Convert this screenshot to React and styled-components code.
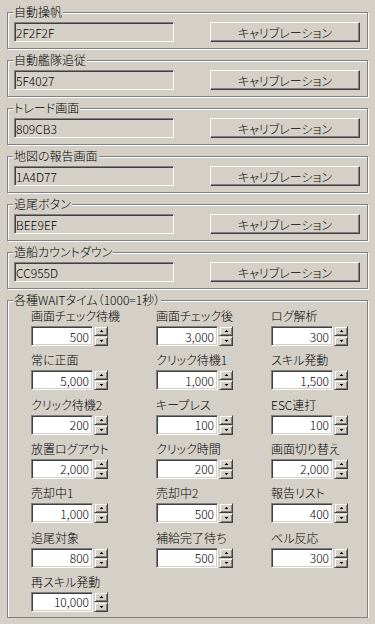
import React from 'react'
import styled, { createGlobalStyle } from 'styled-components'

const GlobalStyle = createGlobalStyle`
  html, body {
    margin: 0;
    padding: 0;
    background: #d4d0c8;
  }
  body {
    font-family: "Noto Sans CJK JP", "Noto Sans", sans-serif;
    font-size: 12px;
    font-weight: 300;
    color: #000;
    font-feature-settings: "palt";
  }
`

const colorGroups = [
  { title: '自動操帆', value: '2F2F2F' },
  { title: '自動艦隊追従', value: '5F4027' },
  { title: 'トレード画面', value: '809CB3' },
  { title: '地図の報告画面', value: '1A4D77' },
  { title: '追尾ボタン', value: 'BEE9EF' },
  { title: '造船カウントダウン', value: 'CC955D' },
]

const waits = [
  ['画面チェック待機', '500'], ['画面チェック後', '3,000'], ['ログ解析', '300'],
  ['常に正面', '5,000'], ['クリック待機1', '1,000'], ['スキル発動', '1,500'],
  ['クリック待機2', '200'], ['キープレス', '100'], ['ESC連打', '100'],
  ['放置ログアウト', '2,000'], ['クリック時間', '200'], ['画面切り替え', '2,000'],
  ['売却中1', '1,000'], ['売却中2', '500'], ['報告リスト', '400'],
  ['追尾対象', '800'], ['補給完了待ち', '500'], ['ベル反応', '300'],
  ['再スキル発動', '10,000'],
]

const Window = styled.div`
  padding-top: 5px;
  display: flex;
  flex-direction: column;
  gap: 4px;
`

const Group = styled.fieldset`
  margin: 0 7px;
  padding: 3px 7px ${p => p.$bottom || 6}px 6px;
  min-width: 0;
  border: 1px solid #808080;
  box-shadow: inset 1px 1px 0 #fff, 1px 1px 0 #fff;
`

const Legend = styled.legend`
  margin-left: -1px;
  padding: 0 1px;
  line-height: 14px;
  font-size: 12px;
  background: #d4d0c8;
`

const Row = styled.div`
  display: flex;
  justify-content: space-between;
  align-items: center;
`

const ReadField = styled.input`
  box-sizing: border-box;
  width: 160px;
  height: 20px;
  margin: 0;
  padding: 0 1px;
  font: inherit;
  font-feature-settings: "palt";
  color: #000;
  background: #d4d0c8;
  border: 1px solid;
  border-color: #808080 #fff #fff #808080;
  box-shadow: inset 1px 1px 0 #404040, inset -1px -1px 0 #d4d0c8;
  outline: none;
`

const Button = styled.button`
  box-sizing: border-box;
  width: 150px;
  height: 20px;
  margin: 0;
  padding: 0;
  font: inherit;
  font-feature-settings: "palt";
  color: #000;
  background: #d4d0c8;
  border: 1px solid;
  border-color: #fff #404040 #404040 #fff;
  box-shadow: inset -1px -1px 0 #808080;
`

const WaitGrid = styled.div`
  margin-top: -1px;
  padding-left: 17px;
  display: grid;
  grid-template-columns: 125px 115px 77px;
  row-gap: 7.33px;
`

const Cell = styled.div`
  display: flex;
  flex-direction: column;
  gap: 3px;
`

const Label = styled.div`
  line-height: 14px;
  white-space: nowrap;
`

const SpinRow = styled.div`
  display: flex;
  gap: 1px;
`

const SpinField = styled.input`
  box-sizing: border-box;
  width: 62px;
  height: 20px;
  margin: 0;
  padding: 0 3px 0 1px;
  text-align: right;
  font: inherit;
  color: #000;
  background: #fff;
  border: 1px solid;
  border-color: #808080 #fff #fff #808080;
  box-shadow: inset 1px 1px 0 #404040, inset -1px -1px 0 #d4d0c8;
  outline: none;
`

const Spinner = styled.div`
  width: 14px;
  height: 20px;
  display: flex;
  flex-direction: column;
`

const SpinButton = styled.div`
  box-sizing: border-box;
  flex: 1;
  display: flex;
  align-items: center;
  justify-content: center;
  background: #d4d0c8;
  border: 1px solid;
  border-color: #d4d0c8 #404040 #404040 #d4d0c8;
  box-shadow: inset 1px 1px 0 #fff, inset -1px -1px 0 #808080;
`

const Arrow = ({ down }) => (
  <svg width="3" height="2" viewBox="0 0 3 2" shapeRendering="crispEdges">
    {down ? (
      <>
        <rect x="0" y="0" width="3" height="1" fill="#000" />
        <rect x="1" y="1" width="1" height="1" fill="#000" />
      </>
    ) : (
      <>
        <rect x="1" y="0" width="1" height="1" fill="#000" />
        <rect x="0" y="1" width="3" height="1" fill="#000" />
      </>
    )}
  </svg>
)

const SpinEdit = ({ value }) => (
  <SpinRow>
    <SpinField value={value} readOnly />
    <Spinner>
      <SpinButton><Arrow /></SpinButton>
      <SpinButton><Arrow down /></SpinButton>
    </Spinner>
  </SpinRow>
)

export default function App() {
  return (
    <>
      <GlobalStyle />
      <Window>
        {colorGroups.map(g => (
          <Group key={g.title}>
            <Legend>{g.title}</Legend>
            <Row>
              <ReadField value={g.value} readOnly />
              <Button>キャリブレーション</Button>
            </Row>
          </Group>
        ))}
        <Group $bottom={5}>
          <Legend>各種WAITタイム（1000=1秒）</Legend>
          <WaitGrid>
            {waits.map(([label, value]) => (
              <Cell key={label}>
                <Label>{label}</Label>
                <SpinEdit value={value} />
              </Cell>
            ))}
          </WaitGrid>
        </Group>
      </Window>
    </>
  )
}
